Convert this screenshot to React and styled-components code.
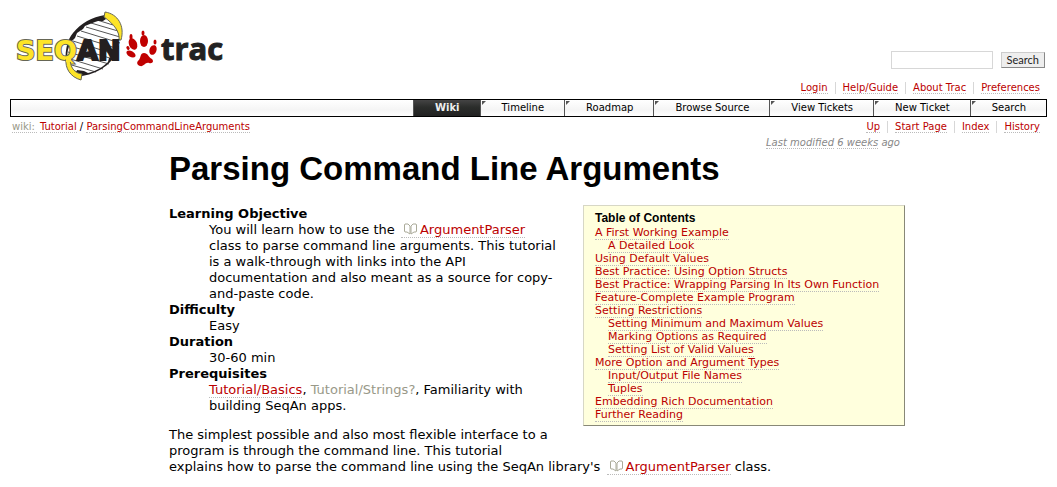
import React from "react";
import styled, { createGlobalStyle, css } from "styled-components";

const sans = `Verdana, "DejaVu Sans", sans-serif`;
const heading = `"Liberation Sans", Arial, sans-serif`;

const GlobalStyle = createGlobalStyle`
  body {
    margin: 10px;
    background: #fff;
    color: #000;
    font: 13px/16px ${sans};
  }
  ul, dl, dd, h1, h2, p { margin: 0; padding: 0; }
  ul { list-style: none; }
`;

const Anchor = styled.a`
  color: #b00;
  text-decoration: none;
  border-bottom: 1px dotted #bbb;
  &:hover { background: #eee; color: #555; }
`;

const Missing = styled.a`
  color: #998;
  text-decoration: none;
`;

const Banner = styled.header`
  display: flex;
  justify-content: space-between;
  height: 89px;
`;

const Tools = styled.div`
  display: flex;
  flex-direction: column;
  justify-content: flex-end;
  align-items: flex-end;
  gap: 13px;
  padding-bottom: 5px;
`;

const SearchForm = styled.form`
  display: flex;
  align-items: center;
  gap: 8px;
  padding-right: 2px;
`;

const SearchBox = styled.input`
  box-sizing: border-box;
  width: 102px;
  height: 18px;
  border: 1px solid #d7d7d7;
  padding: 0 4px;
  font: 11px ${sans};
`;

const SearchButton = styled.button`
  height: 16px;
  border: 1px solid #ccc;
  border-right-color: #888;
  border-bottom-color: #888;
  padding: 0 5px;
  background: #eee;
  color: #222;
  font: 11px/14px Lato, sans-serif;
`;

const LinkList = styled.ul`
  display: flex;
  padding-right: 7px;
  font-size: 10px;
  line-height: 12px;
`;

const LinkItem = styled.li`
  & + & {
    margin-left: 7px;
    border-left: 1px solid #d7d7d7;
    padding-left: 7px;
  }
`;

const MainNav = styled.nav`
  border: 1px solid #000;
  background: linear-gradient(#fff, #f5f5f5 60%, #fff);
`;

const Tabs = styled.ul`
  display: flex;
  justify-content: flex-end;
  font-size: 10px;
  line-height: 16px;
`;

const Tab = styled.li`
  position: relative;
  border-left: 1px solid #555;
  &::before {
    content: "";
    position: absolute;
    top: 1px;
    left: 1px;
    border-top: 4px solid #555;
    border-right: 4px solid transparent;
  }
  ${(p) => p.$active && css`
    background: linear-gradient(#444, #2b2d2b 45%, #222);
    &::before { display: none; }
  `}
`;

const TabLink = styled.a`
  display: block;
  padding: 0 20px 0 21px;
  color: ${(p) => (p.$active ? "#eee" : "#000")};
  font-weight: ${(p) => (p.$active ? "bold" : "normal")};
  text-decoration: none;
`;

const SubBar = styled.div`
  display: flex;
  justify-content: space-between;
  padding: 4px 0 0 2px;
`;

const Path = styled.div`
  font-size: 10px;
  line-height: 12px;
`;

const PathRoot = styled(Anchor)`
  margin-right: 3px;
  padding-right: 2px;
  color: #998;
`;

const Content = styled.main`
  max-width: 736px;
  margin: 0 auto;
  padding-left: 17px;
`;

const Modified = styled.p`
  padding: 4px 5px 0 0;
  text-align: right;
  font-size: 10px;
  line-height: 12px;
  font-style: italic;
  color: #888;
  a { color: inherit; }
`;

const Title = styled.h1`
  margin: 1px 0 17px;
  font: bold 33px/38px ${heading};
`;

const Toc = styled.nav`
  float: right;
  box-sizing: border-box;
  width: 322px;
  margin: 0 0 10px 16px;
  border: 1px solid #d7d7c5;
  border-right-color: #887;
  border-bottom-color: #887;
  padding: 6px 0 4px 11px;
  background: #ffd;
  font-size: 11px;
  line-height: 13px;
  white-space: nowrap;
`;

const TocTitle = styled.h2`
  font: bold 12px/13px ${heading};
  margin-bottom: 1px;
`;

const TocItem = styled.li`
  padding-left: ${(p) => (p.$nested ? 13 : 0)}px;
`;

const Facts = styled.dl`
  padding-top: 1px;
`;

const Term = styled.dt`
  font-weight: bold;
`;

const Detail = styled.dd`
  padding-left: 40px;
`;

const Paragraph = styled.p`
  margin-top: 13px;
`;

const DocLink = styled(Anchor)`
  margin-left: 2px;
  padding-left: 3px;
  svg { margin-right: 3px; vertical-align: -1px; }
`;

const toc = [
  ["A First Working Example"],
  ["A Detailed Look", true],
  ["Using Default Values"],
  ["Best Practice: Using Option Structs"],
  ["Best Practice: Wrapping Parsing In Its Own Function"],
  ["Feature-Complete Example Program"],
  ["Setting Restrictions"],
  ["Setting Minimum and Maximum Values", true],
  ["Marking Options as Required", true],
  ["Setting List of Valid Values", true],
  ["More Option and Argument Types"],
  ["Input/Output File Names", true],
  ["Tuples", true],
  ["Embedding Rich Documentation"],
  ["Further Reading"],
];

const tabs = ["Wiki", "Timeline", "Roadmap", "Browse Source", "View Tickets", "New Ticket", "Search"];

const LogoText = styled.text`
  font: bold 27px "DejaVu Sans", sans-serif;
  paint-order: stroke;
  stroke-width: 2px;
`;

const LogoTrac = styled.text`
  font: bold 31px "Open Sans", sans-serif;
  fill: #222;
  stroke: #222;
  stroke-width: 1px;
`;

function Logo() {
  return (
    <svg width="220" height="76" viewBox="10 10 220 76" role="img" aria-label="SeqAn Trac">
      <path d="M104 17C86 21 74 30 68 43L66 60L70 69L80 74C100 72 114 62 118 50L121 36C117 26 111 21 104 17Z" fill="#fff" />
      <path
        d="M97 20L113 25M91 23L118 31M86 27L120 37M81 31L120 43M77 36L119 49M73 41L117 55M70 46L113 59M68 52L109 64M67 58L103 69M68 64L96 72M71 70L86 74"
        fill="none"
        stroke="#555"
      />
      <path d="M105 15C92 17 81 23 73 33C70 37 68 40 67 45C66 50 65 55 66 60L67 60C67 53 68 47 71 42L75 38L77 33L83 29L85 26C90 24 94 22 98 21L103 21L106 19Z" fill="#231f20" />
      <path d="M119 46C116 60 102 73 82 76L76 74L77 70L84 71L88 73C96 71 103 67 108 62L109 58L114 56L117 46Z" fill="#231f20" />
      <path d="M105 12C118 14 125 26 121 40L119 40C120 32 114 24 104 17Z" fill="#fde428" stroke="#665" />
      <LogoText x="16" y="60" fill="#fde428" stroke="#665">SEQ</LogoText>
      <LogoText x="77" y="60" fill="#231f20" stroke="#231f20">AN</LogoText>
      <path d="M66 59C65 68 70 77 81 80L82 74C75 73 71 69 70 60Z" fill="#fde428" stroke="#665" />
      <path d="M66 57H71L71 62H66Z" fill="#fde428" />
      <g fill="#c00000">
        <ellipse cx="133" cy="44" rx="4" ry="6" transform="rotate(-24 133 44)" />
        <ellipse cx="131" cy="37" rx="1.500" ry="3" />
        <ellipse cx="144" cy="41" rx="4" ry="6" />
        <ellipse cx="143" cy="33" rx="1.500" ry="2.500" />
        <ellipse cx="131" cy="54" rx="5" ry="3" transform="rotate(30 131 54)" />
        <ellipse cx="128" cy="48" rx="1.500" ry="2" transform="rotate(-30 128 48)" />
        <ellipse cx="153" cy="50" rx="3.500" ry="5" transform="rotate(20 153 50)" />
        <ellipse cx="155" cy="42" rx="1.500" ry="2.500" />
        <path d="M144 53C148 53 148 57 152 59C154 61 153 64 149 63C145 62 144 67 140 66C137 65 136 62 139 60C141 57 140 53 144 53Z" />
      </g>
      <LogoTrac x="161" y="60">trac</LogoTrac>
    </svg>
  );
}

function Book() {
  return (
    <svg width="13" height="12" viewBox="0 0 13 12" fill="none" stroke="#aa9" aria-hidden="true">
      <path d="M6 3L4 1H1L.5 2V8L1 9H3L6 11V3M7 3L9 1H12L12.500 2V8L12 9H10L7 11V3" />
    </svg>
  );
}

const Argument = () => (
  <DocLink href="#parser"><Book />ArgumentParser</DocLink>
);

function Links({ items }) {
  return (
    <LinkList>
      {items.map((t) => (
        <LinkItem key={t}><Anchor href="#link">{t}</Anchor></LinkItem>
      ))}
    </LinkList>
  );
}

export default function App() {
  return (
    <>
      <GlobalStyle />
      <Banner>
        <a href="#home"><Logo /></a>
        <Tools>
          <SearchForm>
            <SearchBox type="text" aria-label="Search" />
            <SearchButton type="button">Search</SearchButton>
          </SearchForm>
          <Links items={["Login", "Help/Guide", "About Trac", "Preferences"]} />
        </Tools>
      </Banner>
      <MainNav>
        <Tabs>
          {tabs.map((t, i) => (
            <Tab key={t} $active={i === 0}>
              <TabLink href="#tab" $active={i === 0}>{t}</TabLink>
            </Tab>
          ))}
        </Tabs>
      </MainNav>
      <SubBar>
        <Path>
          <PathRoot href="#wiki">wiki:</PathRoot>
          <Anchor href="#tutorial">Tutorial</Anchor> / <Anchor href="#page">ParsingCommandLineArguments</Anchor>
        </Path>
        <Links items={["Up", "Start Page", "Index", "History"]} />
      </SubBar>
      <Content>
        <Modified>
          <Anchor href="#diff">Last modified</Anchor> <Anchor href="#time">6 weeks</Anchor> ago
        </Modified>
        <Title>Parsing Command Line Arguments</Title>
        <Toc aria-label="Table of Contents">
          <TocTitle>Table of Contents</TocTitle>
          <ul>
            {toc.map(([t, nested]) => (
              <TocItem key={t} $nested={nested}><Anchor href="#section">{t}</Anchor></TocItem>
            ))}
          </ul>
        </Toc>
        <Facts>
          <Term>Learning Objective</Term>
          <Detail>
            You will learn how to use the <Argument /><br />
            class to parse command line arguments. This tutorial<br />
            is a walk-through with links into the API<br />
            documentation and also meant as a source for copy-<br />
            and-paste code.
          </Detail>
          <Term>Difficulty</Term>
          <Detail>Easy</Detail>
          <Term>Duration</Term>
          <Detail>30-60 min</Detail>
          <Term>Prerequisites</Term>
          <Detail>
            <Anchor href="#basics">Tutorial/Basics</Anchor>, <Missing href="#strings">Tutorial/Strings?</Missing>, Familiarity
            with<br />building SeqAn apps.
          </Detail>
        </Facts>
        <Paragraph>
          The simplest possible and also most flexible interface to a<br />
          program is through the command line. This tutorial<br />
          explains how to parse the command line using the SeqAn library's <Argument /> class.
        </Paragraph>
      </Content>
    </>
  );
}
